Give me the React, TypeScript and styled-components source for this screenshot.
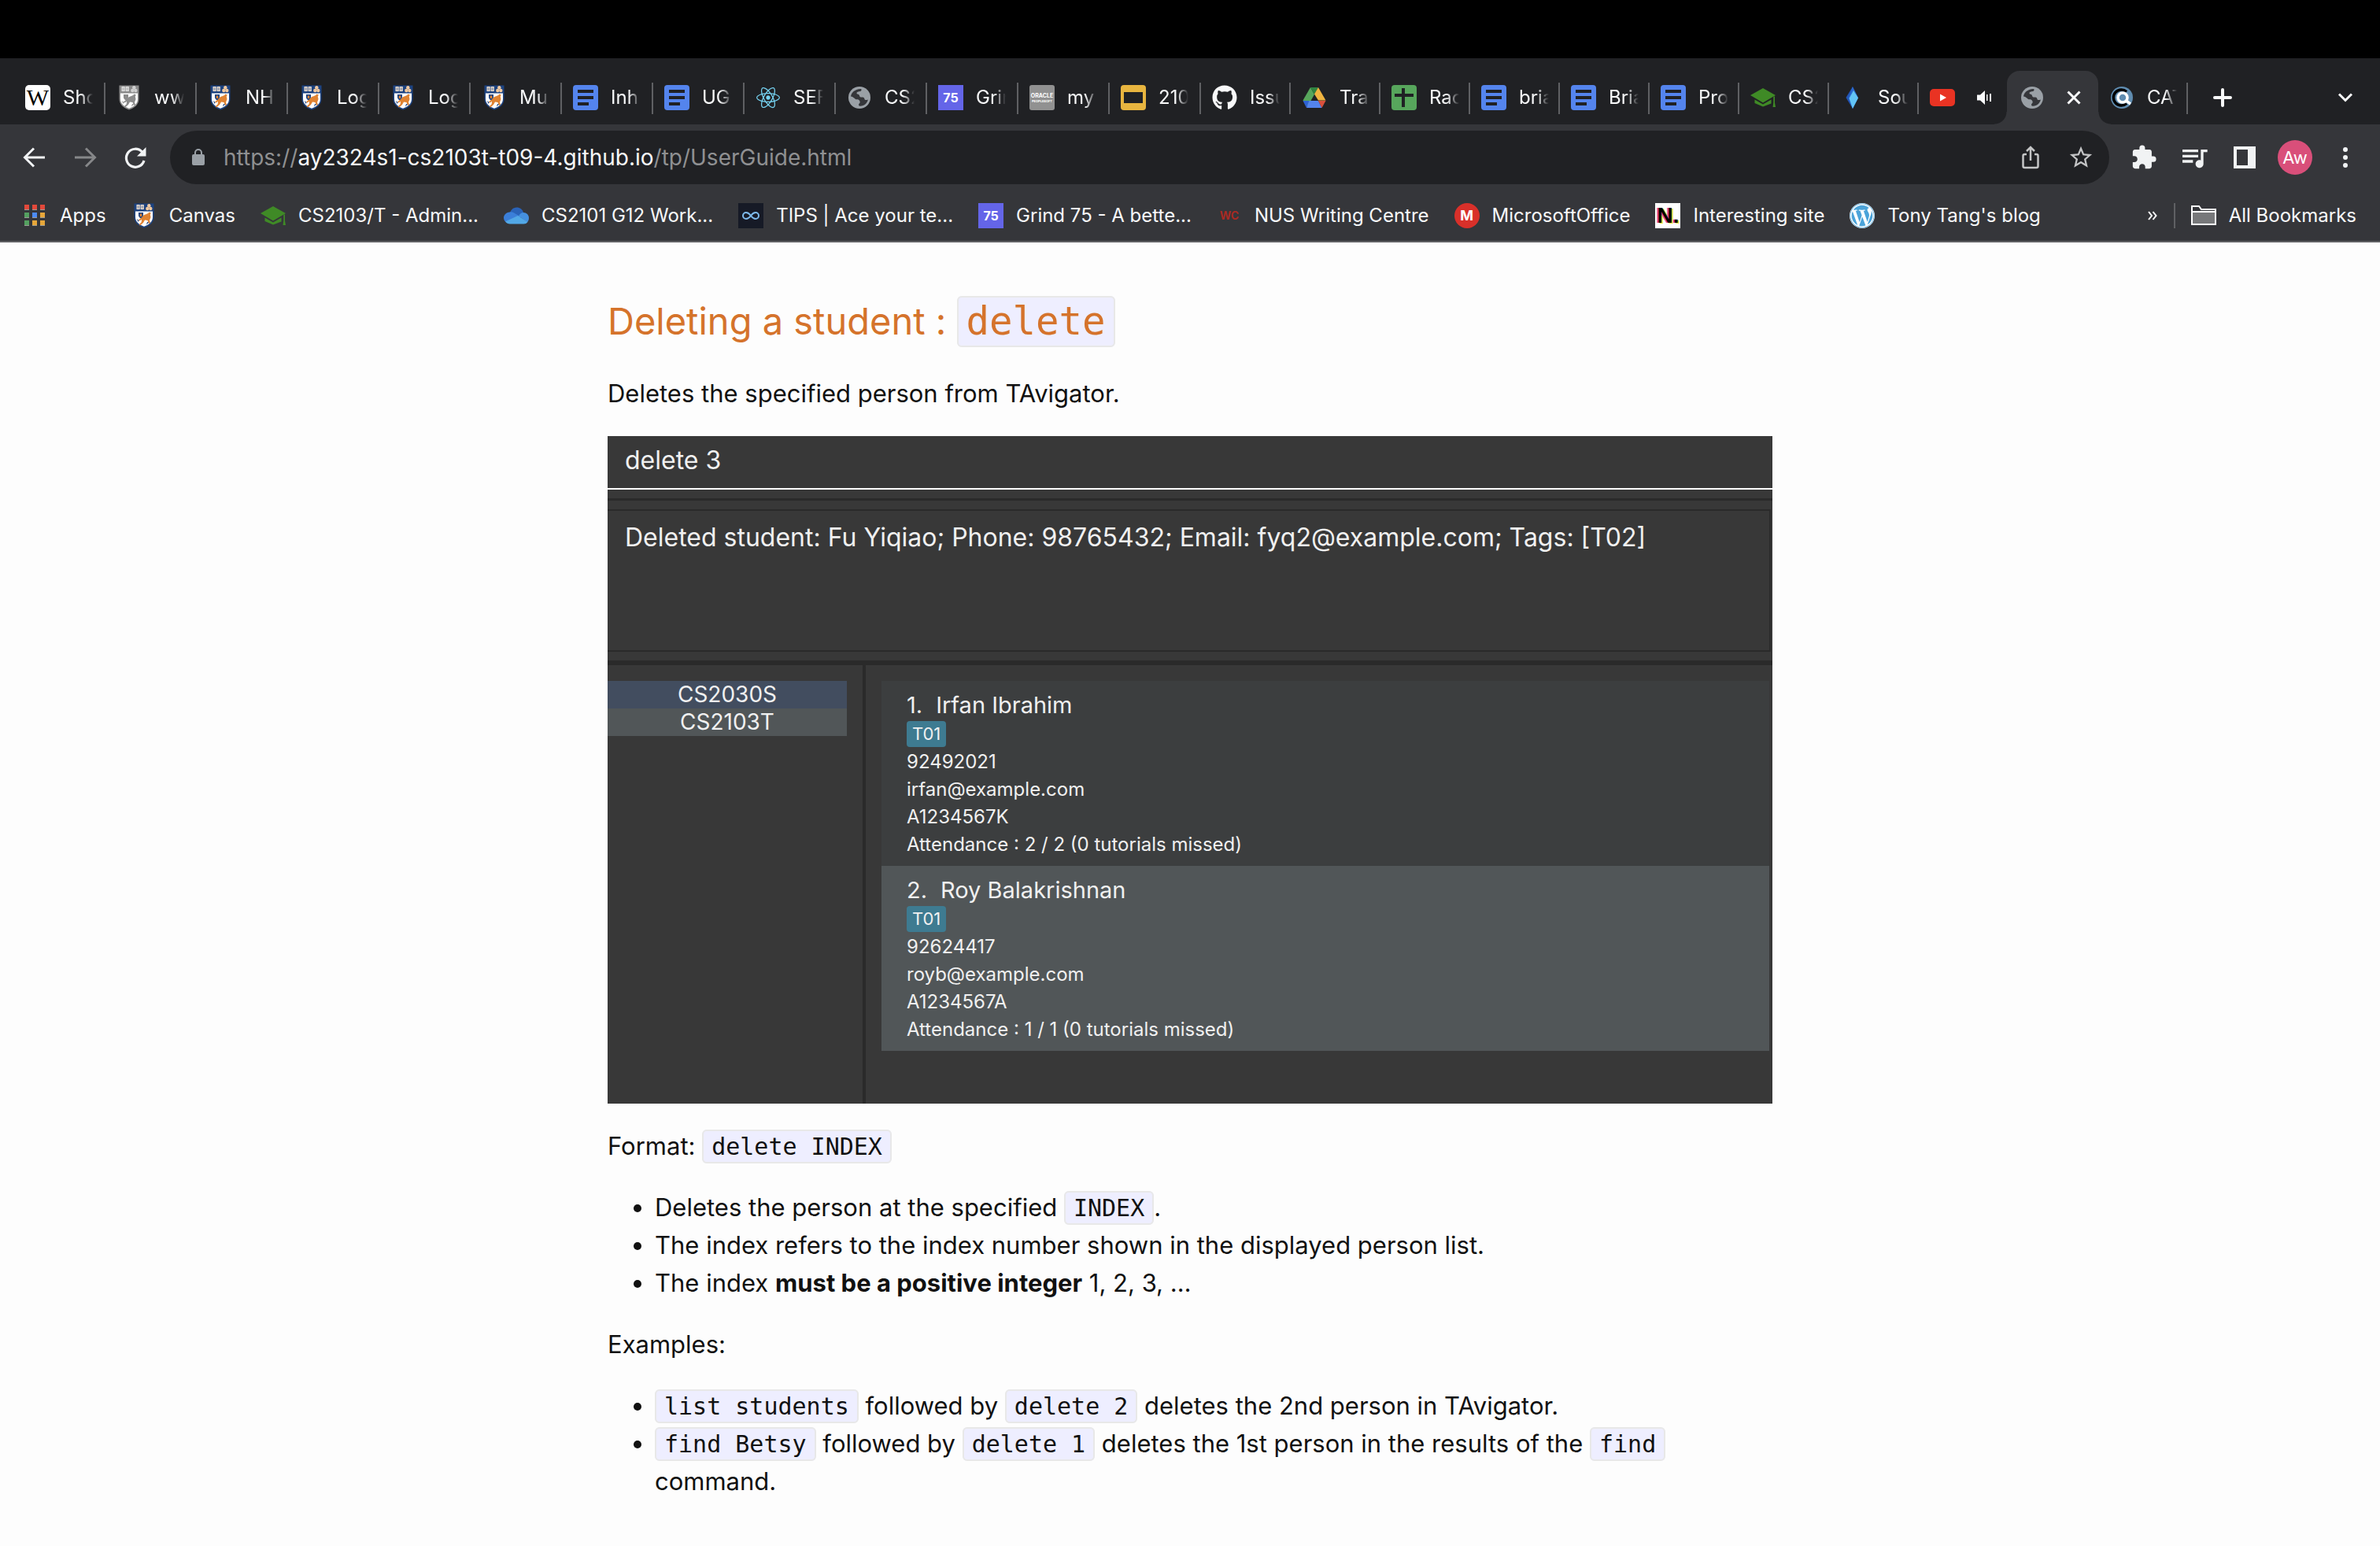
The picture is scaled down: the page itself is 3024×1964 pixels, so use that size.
import React from "react";
import styled, { createGlobalStyle, css } from "styled-components";
import { FaGithub, FaReact, FaWordpress } from "react-icons/fa";
import { LuInfinity } from "react-icons/lu";
import { MdExtension, MdOutlineStarBorder, MdQueueMusic } from "react-icons/md";

const sans = `Inter, "Liberation Sans", sans-serif`;
const mono = `"DejaVu Sans Mono", "Liberation Mono", monospace`;

const color = {
  frame: "#202124",
  toolbar: "#35363a",
  line: "#5f6063",
  chromeText: "#f8f9fa",
  icon: "#f1f3f4",
  dim: "#8f9092",
  page: "#fdfdfd",
  ink: "#111111",
  accent: "#d5732b",
  codeBg: "#eeeeff",
  codeLine: "#e8e8e8",
  pane: "#383838",
  groove: "#2a2a2a",
  paneText: "#f0f0f0",
};

const GlobalStyle = createGlobalStyle`
  *, *::before, *::after { box-sizing: border-box; }
  body { margin: 0; background: ${color.page}; font-family: ${sans}; }
  button { border: 0; padding: 0; background: none; color: inherit; font: inherit; }
  a { color: inherit; text-decoration: none; }
  svg { display: block; flex: none; }
`;

/* ---------- browser frame ---------- */

const MenuBarGap = styled.div`
  height: 74px;
  background: #000;
`;

const TabStrip = styled.nav`
  display: flex;
  height: 84px;
  padding: 16px 0 0 18px;
  background: ${color.frame};
  color: ${color.chromeText};
  overflow: hidden;
`;

const TabButton = styled.button<{ $narrow?: boolean; $active?: boolean; $plain?: boolean }>`
  position: relative;
  display: flex;
  align-items: center;
  gap: 16px;
  flex: none;
  width: ${(p) => (p.$plain ? 112 : p.$narrow ? 114 : 116)}px;
  height: 68px;
  padding: 0 14px;
  font-size: 24px;
  line-height: 32px;
  text-align: left;

  &::after {
    content: "";
    position: absolute;
    right: 0;
    top: 15px;
    width: 2px;
    height: 40px;
    background: ${(p) => (p.$plain || p.$active ? "transparent" : color.line)};
  }

  ${(p) =>
    p.$active &&
    css`
      padding: 0 16px;
      border-radius: 16px 16px 0 0;
      background: ${color.toolbar};

      &::before,
      &::after {
        content: "";
        position: absolute;
        top: auto;
        bottom: 0;
        width: 16px;
        height: 16px;
      }
      &::before {
        left: -16px;
        background: radial-gradient(circle at 0 0, transparent 15px, ${color.toolbar} 16px);
      }
      &::after {
        right: -16px;
        background: radial-gradient(circle at 100% 0, transparent 15px, ${color.toolbar} 16px);
      }
    `}
`;

const TabTitle = styled.span`
  width: 38px;
  overflow: hidden;
  white-space: nowrap;
  mask-image: linear-gradient(to right, #000 60%, transparent);
`;

const TabAction = styled.span`
  display: grid;
  place-items: center;
  flex: none;
  width: 42px;
  height: 32px;
`;

const StripButton = styled.button<{ $end?: boolean }>`
  display: grid;
  place-items: center;
  width: 88px;
  height: 68px;
  margin-left: ${(p) => (p.$end ? "auto" : "0")};
`;

const Toolbar = styled.div`
  display: flex;
  align-items: center;
  height: 84px;
  padding: 0 12px;
  background: ${color.toolbar};
  color: ${color.icon};
`;

const ToolButton = styled.button<{ $dim?: boolean }>`
  display: grid;
  place-items: center;
  flex: none;
  width: 64px;
  height: 64px;
  color: ${(p) => (p.$dim ? "#868789" : "inherit")};
`;

const OmniBox = styled.div`
  display: flex;
  align-items: center;
  flex: 1;
  height: 68px;
  margin: 0 12px;
  padding: 0 4px 0 26px;
  border-radius: 34px;
  background: ${color.frame};
  color: #c4c5c6;
`;

const Address = styled.span`
  flex: 1;
  margin-left: 22px;
  font-size: 28px;
  line-height: 40px;
  color: ${color.dim};
  white-space: nowrap;

  b {
    font-weight: 400;
    color: ${color.chromeText};
  }
`;

const Avatar = styled.span`
  display: grid;
  place-items: center;
  width: 44px;
  height: 44px;
  border-radius: 50%;
  background: #d94f7a;
  color: #fff;
  font-size: 22px;
`;

const BookmarkBar = styled.nav`
  display: flex;
  align-items: center;
  gap: 32px;
  height: 66px;
  padding: 0 30px 0 28px;
  border-bottom: 2px solid ${color.line};
  background: ${color.toolbar};
  color: ${color.chromeText};
`;

const Bookmark = styled.a`
  display: flex;
  align-items: center;
  gap: 16px;
  font-size: 24px;
  line-height: 32px;
  white-space: nowrap;
`;

const BookmarkEnd = styled.div`
  display: flex;
  align-items: center;
  gap: 20px;
  margin-left: auto;
`;

const EndRule = styled.span`
  width: 2px;
  height: 32px;
  background: ${color.line};
`;

/* ---------- favicons ---------- */

const Tile = styled.span<{ $bg?: string; $fg?: string; $round?: number; $size?: number }>`
  display: grid;
  place-items: center;
  align-content: center;
  flex: none;
  width: 32px;
  height: 32px;
  border-radius: ${(p) => p.$round ?? 0}px;
  background: ${(p) => p.$bg ?? "transparent"};
  color: ${(p) => p.$fg ?? "#fff"};
  font-size: ${(p) => p.$size ?? 16}px;
  font-weight: 700;
  line-height: 1;
`;

const SerifTile = styled(Tile)`
  font-family: "Liberation Serif", serif;
  font-weight: 400;
`;

const PrintTile = styled(Tile)`
  text-shadow: -2px 0 #e0499a, 2px 1px #f3e53a;
  font-family: "Liberation Sans", sans-serif;
`;

const Crest = ({ gray }: { gray?: boolean }) => {
  const navy = gray ? "#8a8a8a" : "#1d4380";
  const amber = gray ? "#8c8c8c" : "#e08332";
  const sand = gray ? "#d0d0d0" : "#f0c9a0";
  return (
    <svg width="32" height="32" viewBox="0 0 32 32">
      <path d="M3.500 .5h25v17c0 7-5 11.500-12.500 14C8.500 29 3.500 24.500 3.500 17.500z" fill={navy} />
      <path d="M5 10.500h22v7c0 6-4.500 10-11 12.300C9.500 27.500 5 23.500 5 17.500z" fill="#fff" />
      <path d="M6.500 2h4.200v6H6.500zM11.600 2h4.200v6h-4.200z" fill={gray ? "#e4e4e4" : "#f5e3cf"} />
      <path d="M7.500 4h2.200M7.500 6h2.200M12.600 4h2.200M12.600 6h2.200" stroke={navy} strokeWidth=".8" />
      <circle cx="22.300" cy="3.300" r="2.200" fill={sand} />
      <circle cx="20.300" cy="7" r="2.200" fill={sand} />
      <circle cx="24.300" cy="7" r="2.200" fill={sand} />
      <path d="M9 12h6v3.500c0 2-1.500 3-3 4-1.500-1-3-2-3-4z" fill={navy} />
      <path d="M10.800 13.500h2.400v3.500h-2.400z" fill={amber} />
      <path d="M16 15c2-1 5-1 6.500-3.500l2.300 1-1 2 .7 3.500-1.500 4 1 3-2 1-1.500-4-3.500-.5-2 3.500-4 3.500-1.300-1.300 3-3 .3-3.500-3 2-.8-1.500 3.800-3z" fill={amber} />
      <path d="M7 20l2.500 2-1 2zM20 24l2 .5-3 3z" fill={navy} />
    </svg>
  );
};

const Doc = () => (
  <svg width="32" height="32" viewBox="0 0 32 32">
    <rect width="32" height="32" rx="4" fill="#5484ed" />
    <path d="M6 6h20v4H6zM6 14h20v4H6zM6 22h14v4H6z" fill={color.frame} />
  </svg>
);

const Slides = () => (
  <svg width="32" height="32" viewBox="0 0 32 32">
    <rect width="32" height="32" rx="4" fill="#e8b53f" />
    <path d="M4 9h24v14H4z" fill={color.frame} />
  </svg>
);

const Sheet = () => (
  <svg width="32" height="32" viewBox="0 0 32 32">
    <rect width="32" height="32" rx="4" fill="#57a65c" />
    <path d="M13 4h4v24h-4zM4 11h24v4H4z" fill={color.frame} />
  </svg>
);

const Drive = () => (
  <svg width="32" height="32" viewBox="0 0 32 32">
    <path d="M11 3l5 9L7.500 27 1.500 19.500z" fill="#57a65c" />
    <path d="M11 3h10l-5 9z" fill="#2f8440" />
    <path d="M21 3l9.500 16.500h-9.500L16 11.500z" fill="#f0b440" />
    <path d="M1.500 20h8l-3.500 9z" fill="#2d62d4" />
    <path d="M9.500 20H21l4.500 9H6z" fill="#5484ed" />
    <path d="M21 20h9.500L25.500 29z" fill="#d8503c" />
  </svg>
);

const Globe = () => (
  <svg width="32" height="32" viewBox="0 0 32 32">
    <circle cx="16" cy="16" r="14" fill="#9aa0a6" />
    <path
      d="M5 14.500C5.600 9.500 10 5.500 17.500 5c1.500 0 1.500 2.500-.5 3-2.500.5-4.500.5-4.500 2.500 0 1.500 3 .5 3.500 3 .3 1.500 1 2 2.500 2 3 0 3.500.5 4 2.500.3 1 1.500 1.500 4.300.5-.8 4.500-4.300 7.800-9.800 8.300-2 0-2.500-2-1.500-3 1-1 1.500-1.500 1-3-.7-2-2-2.500-4-2.500-2.500 0-3.500-3.300-7.500-3.800z"
      fill={color.toolbar}
    />
  </svg>
);

const Cap = () => (
  <svg width="32" height="32" viewBox="0 0 32 32" fill="#3f8a26">
    <path d="M16 4l16 9-16 9.500L0 13z" />
    <path d="M5.500 18.500L16 24.500l10.500-6v5L16 27.500 5.500 23z" />
    <path d="M29.300 14.500h1.700v8l1 5.500h-3.500l.8-5.500z" />
  </svg>
);

const Gem = () => (
  <svg width="32" height="32" viewBox="0 0 32 32">
    <path d="M16 2L7.500 16 16 30z" fill="#2356b8" />
    <path d="M16 2l7 14-7 14-5-14z" fill="#2a69cf" />
    <path d="M17 7l6 9.500L16 30l-4.500-13z" fill="#62c4f5" />
  </svg>
);

const YouTube = () => (
  <svg width="32" height="32" viewBox="0 0 32 32">
    <rect y="5" width="32" height="22" rx="5" fill="#e93323" />
    <path d="M13 11.500v9l8-4.500z" fill="#fff" />
  </svg>
);

const Search = () => (
  <svg width="32" height="32" viewBox="0 0 32 32" fill="none">
    <circle cx="16" cy="16" r="14" fill="#5f8cb0" />
    <path d="M22 8.500a10 10 0 1 0 0 15" stroke="#000" strokeWidth="3.500" />
    <circle cx="17" cy="16" r="6" stroke="#fff" strokeWidth="3.500" />
    <path d="M21.500 20l5.500 4" stroke="#fff" strokeWidth="3.500" />
  </svg>
);

const Cloud = () => (
  <svg width="32" height="32" viewBox="0 0 32 32">
    <path d="M8 14c0-5 4-8.500 8.500-8.500 4 0 7.500 2.500 8.500 6.500l-7 8z" fill="#2a63b8" />
    <path d="M7.500 11.500c2.500-.5 5 .3 7 1.800l7.500 4.500-16 8C2 24.500 0 22 0 18.800 0 15 3 12 7.500 11.500z" fill="#3b7fd9" />
    <path d="M25 12c4 0 7 3.200 7 7 0 2-.8 4-2 5.200L19 16.500c1.500-2.800 3.500-4.500 6-4.500z" fill="#4590df" />
    <path d="M2 23.500L18 16l12.500 8c-1.300 1.700-3 2.500-5 2.500H8c-2.500 0-4.500-1-6-3z" fill="#52a8e6" />
  </svg>
);

const AppsGrid = () => {
  const cells = ["#e2483a", "#e2483a", "#e2483a", "#54a060", "#4c8bf5", "#e6a63a", "#54a060", "#e6a63a", "#e6a63a"];
  return (
    <svg width="32" height="32" viewBox="0 0 32 32">
      {cells.map((fill, i) => {
        const x = 3 + (i % 3) * 10;
        const y = 2 + Math.floor(i / 3) * 10;
        return (
          <g key={i}>
            <rect x={x} y={y} width="6" height="7" fill="#9a9a96" />
            <rect x={x} y={y} width="6" height="6" fill={fill} />
          </g>
        );
      })}
    </svg>
  );
};

const OracleSub = styled.span`
  margin-top: 2px;
  font-size: 4px;
`;

const Oracle = () => (
  <Tile $bg="#919191" $round={3} $size={7}>
    <span>ORACLE</span>
    <OracleSub>PEOPLESOFT</OracleSub>
  </Tile>
);

const Grind = () => (
  <Tile $bg="#6465e8" $size={16}>
    75
  </Tile>
);

/* ---------- toolbar glyphs ---------- */

const Arrow = ({ forward }: { forward?: boolean }) => (
  <svg width="32" height="32" viewBox="0 0 32 32" fill="none" stroke="currentColor" strokeWidth="3">
    <path d={forward ? "M3 16h25M17 4.500L28.500 16 17 27.500" : "M29 16H4M15 4.500L3.500 16 15 27.500"} />
  </svg>
);

const Reload = () => (
  <svg width="32" height="32" viewBox="0 0 32 32">
    <path d="M27 20a11.500 11.500 0 1 1-2.500-11" fill="none" stroke="currentColor" strokeWidth="3.200" />
    <path d="M29.500 3v11.500H18z" fill="currentColor" />
  </svg>
);

const Lock = () => (
  <svg width="20" height="24" viewBox="0 0 20 24">
    <rect x="2" y="8" width="16" height="14" rx="2" fill="#9aa0a6" />
    <path d="M6 9V6a4 4 0 0 1 8 0v3" fill="none" stroke="#9aa0a6" strokeWidth="2" />
  </svg>
);

const Share = () => (
  <svg width="32" height="32" viewBox="0 0 32 32" fill="none" stroke="currentColor" strokeWidth="2.500">
    <path d="M11 12H8.500a2 2 0 0 0-2 2v13a2 2 0 0 0 2 2h15a2 2 0 0 0 2-2V14a2 2 0 0 0-2-2H21M16 20V4M11 8l5-5 5 5" />
  </svg>
);

const SidePanel = () => (
  <svg width="28" height="28" viewBox="0 0 28 28">
    <path d="M0 0h28v28H0zM4 4v20h14V4z" fill="currentColor" fillRule="evenodd" />
  </svg>
);

const Dots = () => (
  <svg width="28" height="28" viewBox="0 0 28 28" fill="currentColor">
    <circle cx="14" cy="4" r="3" />
    <circle cx="14" cy="14" r="3" />
    <circle cx="14" cy="24" r="3" />
  </svg>
);

const Plus = () => (
  <svg width="24" height="24" viewBox="0 0 24 24" stroke="currentColor" strokeWidth="4" strokeLinecap="round">
    <path d="M12 2v20M2 12h20" />
  </svg>
);

const Close = () => (
  <svg width="20" height="20" viewBox="0 0 20 20" stroke="currentColor" strokeWidth="3">
    <path d="M2.500 2.500l15 15M17.500 2.500l-15 15" />
  </svg>
);

const Chevron = () => (
  <svg width="20" height="14" viewBox="0 0 20 14" fill="none" stroke="currentColor" strokeWidth="3">
    <path d="M2 2.500l8 8 8-8" />
  </svg>
);

const Speaker = () => (
  <svg width="20" height="20" viewBox="0 0 20 20" fill="currentColor">
    <path d="M1 6.500h4L11 1v18l-6-5.500H1zM13 6h1.500v8H13zM17 5h2v10h-2z" />
  </svg>
);

const More = () => (
  <svg width="14" height="14" viewBox="0 0 14 14" fill="none" stroke="currentColor" strokeWidth="2">
    <path d="M2 2l4 5-4 5M7.500 2l4 5-4 5" />
  </svg>
);

const Folder = () => (
  <svg width="32" height="32" viewBox="0 0 32 32">
    <path d="M1 27V4h9l3 4h18v19z" fill="#35363a" stroke="#fff" strokeWidth="2" />
    <path d="M1 11h30v16H1z" fill="#77787a" stroke="#fff" strokeWidth="2" />
  </svg>
);

const wideTabs: [React.ReactNode, string][] = [
  [<SerifTile $bg="#fff" $fg="#000" $round={5} $size={30}>W</SerifTile>, "Sho"],
  [<Crest gray />, "ww"],
  [<Crest />, "NH"],
  [<Crest />, "Log"],
  [<Crest />, "Log"],
  [<Crest />, "Mu"],
  [<Doc />, "Inh"],
  [<Doc />, "UG"],
  [<Tile $fg="#76d3f2" $size={30}><FaReact /></Tile>, "SEF"],
  [<Globe />, "CS2"],
  [<Grind />, "Grin"],
  [<Oracle />, "my"],
  [<Slides />, "210"],
];

const narrowTabs: [React.ReactNode, string][] = [
  [<FaGithub size={32} />, "Issu"],
  [<Drive />, "Tra"],
  [<Sheet />, "Rac"],
  [<Doc />, "bria"],
  [<Doc />, "Bria"],
  [<Doc />, "Pro"],
  [<Cap />, "CS2"],
  [<Gem />, "Sou"],
];

const bookmarks: [React.ReactNode, string][] = [
  [<AppsGrid />, "Apps"],
  [<Crest />, "Canvas"],
  [<Cap />, "CS2103/T - Admin..."],
  [<Cloud />, "CS2101 G12 Work..."],
  [<Tile $bg="#161a26" $fg="#7db9ea" $size={24}><LuInfinity /></Tile>, "TIPS | Ace your te..."],
  [<Grind />, "Grind 75 - A bette..."],
  [<Tile $fg="#a82a22" $size={14}>WC</Tile>, "NUS Writing Centre"],
  [<Tile $bg="#d9302a" $round={16} $size={18}>M</Tile>, "MicrosoftOffice"],
  [<PrintTile $bg="#fff" $fg="#000" $size={28}>N.</PrintTile>, "Interesting site"],
  [<Tile $bg="#fff" $fg="#4ba3d9" $round={16} $size={32}><FaWordpress /></Tile>, "Tony Tang's blog"],
];

/* ---------- guide page ---------- */

const Guide = styled.main`
  max-width: 1480px;
  margin: 0 auto;
  padding: 61px 0 50px;
  color: ${color.ink};
  font-size: 31px;
  line-height: 48px;
`;

const Heading = styled.h3`
  margin: 0 0 29px;
  color: ${color.accent};
  font-size: 47px;
  font-weight: 400;
  line-height: 78px;
`;

const Paragraph = styled.p`
  margin: 0 0 30px;
`;

const Code = styled.code<{ $large?: boolean }>`
  padding: 2px 10px;
  border: 2px solid ${color.codeLine};
  border-radius: 6px;
  background: ${color.codeBg};
  font-family: ${mono};
  font-size: ${(p) => (p.$large ? 49 : 30)}px;
  line-height: 1;
`;

const List = styled.ul`
  margin: 0 0 30px;
  padding: 0 0 0 60px;
`;

/* ---------- application preview ---------- */

const Preview = styled.figure`
  margin: 0 0 30px;
  min-height: 848px;
  display: flex;
  flex-direction: column;
  background: ${color.pane};
  color: ${color.paneText};
`;

const CommandInput = styled.input`
  width: 100%;
  height: 68px;
  padding: 0 22px 6px;
  border: 0;
  border-bottom: 2px solid #fff;
  background: transparent;
  color: ${color.paneText};
  font-family: ${sans};
  font-size: 32px;
`;

const ResultPane = styled.div`
  margin-top: 11px;
  padding: 11px 2px 11px 0;
  border-top: 3px solid ${color.groove};
  border-bottom: 6px solid ${color.groove};
`;

const Result = styled.output`
  display: block;
  height: 181px;
  padding: 10px 22px;
  border: 2px solid ${color.groove};
  border-left: 0;
  font-size: 32px;
  line-height: 48px;
`;

const Body = styled.div`
  display: grid;
  grid-template-columns: 324px 1fr;
  flex: 1;
`;

const CoursePane = styled.div`
  padding: 20px 20px 0 0;
`;

const PersonPane = styled.div`
  padding: 20px 4px 0 20px;
  border-left: 4px solid ${color.groove};
`;

const Rows = styled.ul`
  margin: 0;
  padding: 0;
  list-style: none;
`;

const Course = styled.li<{ $selected?: boolean }>`
  background: ${(p) => (p.$selected ? "#424d5f" : "#515658")};
  font-size: 28px;
  line-height: 35px;
  text-align: center;
`;

const Person = styled.li<{ $shade: string }>`
  padding: 12px 32px 10px;
  background: ${(p) => p.$shade};
  font-size: 24px;
  line-height: 35px;
`;

const PersonName = styled.div`
  display: flex;
  gap: 17px;
  font-size: 29px;
  line-height: 38px;
`;

const TagRow = styled.div`
  display: flex;
  align-items: center;
  height: 35px;
`;

const Tag = styled.span`
  padding: 0 7px;
  border-radius: 4px;
  background: #3e7b91;
  font-size: 22px;
  line-height: 33px;
`;

const people = [
  { index: "1.", name: "Irfan Ibrahim", tag: "T01", phone: "92492021", email: "irfan@example.com", id: "A1234567K", attendance: "2 / 2", shade: "#3c3e3f" },
  { index: "2.", name: "Roy Balakrishnan", tag: "T01", phone: "92624417", email: "royb@example.com", id: "A1234567A", attendance: "1 / 1", shade: "#515658" },
];

export default function App() {
  return (
    <>
      <GlobalStyle />
      <header>
        <MenuBarGap />
        <TabStrip aria-label="Tabs">
          {wideTabs.map(([icon, title], i) => (
            <TabButton key={i}>
              {icon}
              <TabTitle>{title}</TabTitle>
            </TabButton>
          ))}
          {narrowTabs.map(([icon, title], i) => (
            <TabButton key={i} $narrow>
              {icon}
              <TabTitle>{title}</TabTitle>
            </TabButton>
          ))}
          <TabButton $plain aria-label="YouTube">
            <YouTube />
            <TabAction><Speaker /></TabAction>
          </TabButton>
          <TabButton $active aria-label="User Guide">
            <Globe />
            <TabAction><Close /></TabAction>
          </TabButton>
          <TabButton $narrow>
            <Search />
            <TabTitle>CAT</TabTitle>
          </TabButton>
          <StripButton aria-label="New tab"><Plus /></StripButton>
          <StripButton $end aria-label="Search tabs"><Chevron /></StripButton>
        </TabStrip>

        <Toolbar>
          <ToolButton aria-label="Back"><Arrow /></ToolButton>
          <ToolButton $dim aria-label="Forward"><Arrow forward /></ToolButton>
          <ToolButton aria-label="Reload"><Reload /></ToolButton>
          <OmniBox>
            <Lock />
            <Address>
              https://<b>ay2324s1-cs2103t-t09-4.github.io</b>/tp/UserGuide.html
            </Address>
            <ToolButton aria-label="Share"><Share /></ToolButton>
            <ToolButton aria-label="Bookmark this page"><MdOutlineStarBorder size={34} /></ToolButton>
          </OmniBox>
          <ToolButton aria-label="Extensions"><MdExtension size={34} /></ToolButton>
          <ToolButton aria-label="Media"><MdQueueMusic size={40} /></ToolButton>
          <ToolButton aria-label="Side panel"><SidePanel /></ToolButton>
          <ToolButton aria-label="Profile"><Avatar>Aw</Avatar></ToolButton>
          <ToolButton aria-label="Menu"><Dots /></ToolButton>
        </Toolbar>

        <BookmarkBar aria-label="Bookmarks">
          {bookmarks.map(([icon, title]) => (
            <Bookmark key={title} href="#">
              {icon}
              {title}
            </Bookmark>
          ))}
          <BookmarkEnd>
            <button aria-label="More bookmarks"><More /></button>
            <EndRule />
            <Bookmark href="#">
              <Folder />
              All Bookmarks
            </Bookmark>
          </BookmarkEnd>
        </BookmarkBar>
      </header>

      <Guide>
        <Heading>
          Deleting a student : <Code $large>delete</Code>
        </Heading>
        <Paragraph>Deletes the specified person from TAvigator.</Paragraph>

        <Preview>
          <CommandInput aria-label="Command" defaultValue="delete 3" />
          <ResultPane>
            <Result>
              Deleted student: Fu Yiqiao; Phone: 98765432; Email: fyq2@example.com; Tags: [T02]
            </Result>
          </ResultPane>
          <Body>
            <CoursePane>
              <Rows>
                <Course $selected>CS2030S</Course>
                <Course>CS2103T</Course>
              </Rows>
            </CoursePane>
            <PersonPane>
              <Rows>
                {people.map((p) => (
                  <Person key={p.name} $shade={p.shade}>
                    <PersonName>
                      <span>{p.index}</span>
                      <span>{p.name}</span>
                    </PersonName>
                    <TagRow><Tag>{p.tag}</Tag></TagRow>
                    <div>{p.phone}</div>
                    <div>{p.email}</div>
                    <div>{p.id}</div>
                    <div>Attendance : {p.attendance} (0 tutorials missed)</div>
                  </Person>
                ))}
              </Rows>
            </PersonPane>
          </Body>
        </Preview>

        <Paragraph>
          Format: <Code>delete INDEX</Code>
        </Paragraph>
        <List>
          <li>Deletes the person at the specified <Code>INDEX</Code>.</li>
          <li>The index refers to the index number shown in the displayed person list.</li>
          <li>The index <strong>must be a positive integer</strong> 1, 2, 3, …</li>
        </List>
        <Paragraph>Examples:</Paragraph>
        <List>
          <li><Code>list students</Code> followed by <Code>delete 2</Code> deletes the 2nd person in TAvigator.</li>
          <li>
            <Code>find Betsy</Code> followed by <Code>delete 1</Code> deletes the 1st person in the results of the{" "}
            <Code>find</Code> command.
          </li>
        </List>
      </Guide>
    </>
  );
}
